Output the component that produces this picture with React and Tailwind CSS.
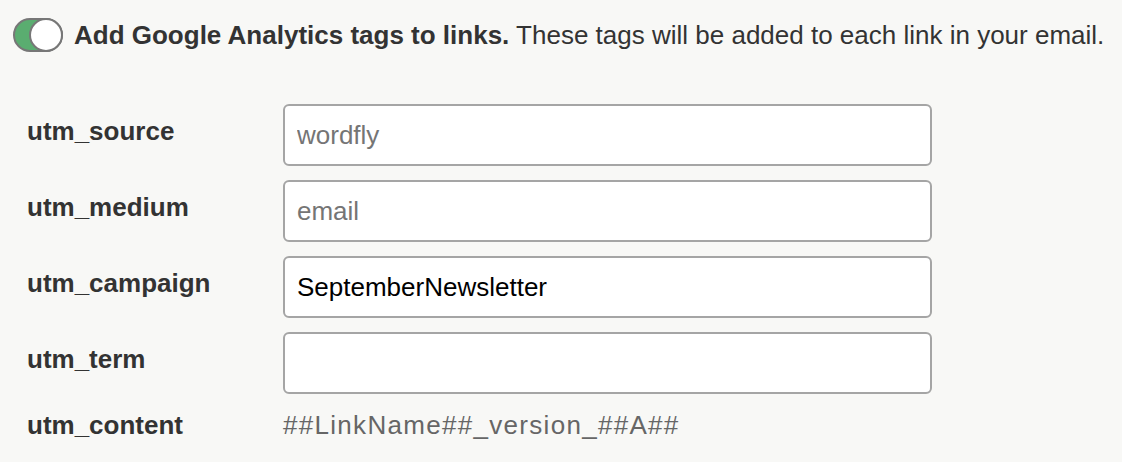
import React from 'react';

const fields = [
  { name: 'utm_source', value: '', placeholder: 'wordfly' },
  { name: 'utm_medium', value: '', placeholder: 'email' },
  { name: 'utm_campaign', value: 'SeptemberNewsletter', placeholder: '' },
  { name: 'utm_term', value: '', placeholder: '' },
];

function Toggle() {
  return (
    <div className="relative w-[50px] h-[34px] shrink-0 rounded-full border-2 border-[#777] bg-[#5aad70]">
      <div className="absolute right-[-2px] top-[-2px] w-[34px] h-[34px] rounded-full border-2 border-[#777] bg-white" />
    </div>
  );
}

export default function App() {
  return (
    <div
      className="w-[1122px] h-[462px] bg-[#f8f8f6] text-[#333] overflow-hidden"
      style={{ fontFamily: '"Liberation Sans", Arial, sans-serif' }}
    >
      <div className="flex items-center gap-[11px] pl-[13px] pt-[18px]">
        <Toggle />
        <p className="text-[26px] leading-[34px] whitespace-nowrap">
          <span className="font-bold">Add Google Analytics tags to links.</span>{' '}
          These tags will be added to each link in your email.
        </p>
      </div>

      <div className="pl-[27px] pt-[52px] flex flex-col gap-[14px]">
        {fields.map((f) => (
          <div key={f.name} className="flex items-start">
            <label className="w-[256px] pt-[12px] text-[26px] leading-[30px] font-bold">{f.name}</label>
            <input
              readOnly
              value={f.value}
              placeholder={f.placeholder}
              className="w-[649px] h-[62px] rounded-[6px] border-2 border-[#a5a5a5] bg-white px-[12px] text-[26px] text-black placeholder:text-[#757575] outline-none"
              style={{ fontFamily: '"Liberation Sans", Arial, sans-serif' }}
            />
          </div>
        ))}
        <div className="flex items-start pt-[2px]">
          <span className="w-[256px] text-[26px] leading-[30px] font-bold">utm_content</span>
          <span className="text-[26px] leading-[30px] tracking-[1.3px] text-[#666]">##LinkName##_version_##A##</span>
        </div>
      </div>
    </div>
  );
}
